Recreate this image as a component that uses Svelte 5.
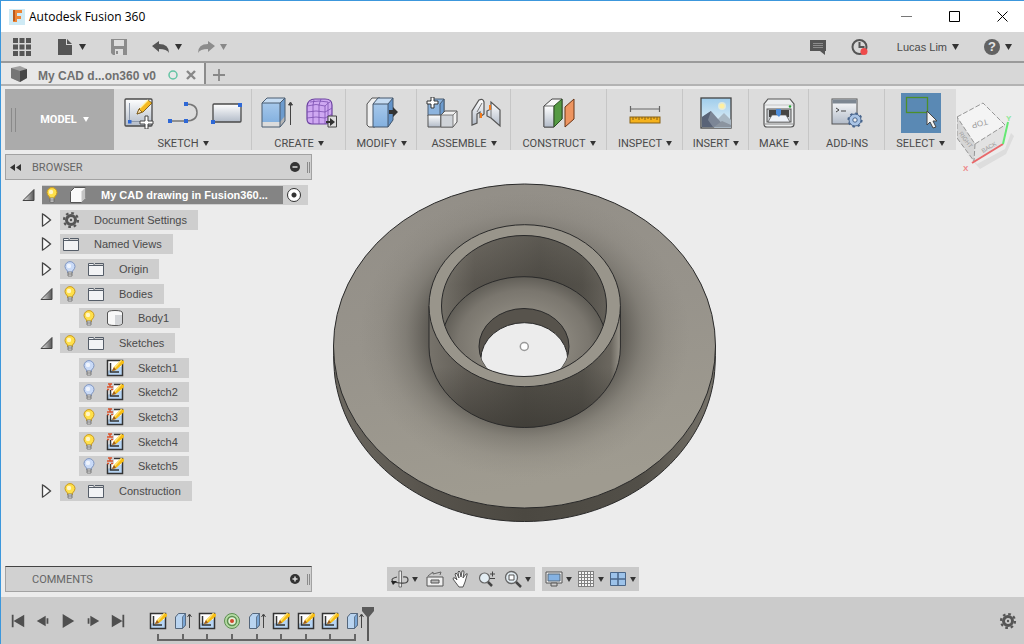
<script lang="ts">
	interface TreeNode {
		label: string;
		level: number;
		icon: string;
		open?: boolean;
		bulb?: boolean;
	}

	interface ToolGroup {
		label: string;
		icons: string[];
		menu: boolean;
	}

	const groups: ToolGroup[] = [
		{ label: 'SKETCH', icons: ['newsketch', 'spline', 'rect'], menu: true },
		{ label: 'CREATE', icons: ['extrude', 'form'], menu: true },
		{ label: 'MODIFY', icons: ['presspull'], menu: true },
		{ label: 'ASSEMBLE', icons: ['component', 'joint'], menu: true },
		{ label: 'CONSTRUCT', icons: ['plane'], menu: true },
		{ label: 'INSPECT', icons: ['measure'], menu: true },
		{ label: 'INSERT', icons: ['decal'], menu: true },
		{ label: 'MAKE', icons: ['print'], menu: true },
		{ label: 'ADD-INS', icons: ['script'], menu: false },
		{ label: 'SELECT', icons: ['select'], menu: true }
	];

	const nodes: TreeNode[] = [
		{ label: 'Document Settings', level: 1, icon: 'gear', open: false },
		{ label: 'Named Views', level: 1, icon: 'folder', open: false },
		{ label: 'Origin', level: 1, icon: 'folder', open: false, bulb: false },
		{ label: 'Bodies', level: 1, icon: 'folder', open: true, bulb: true },
		{ label: 'Body1', level: 2, icon: 'body', bulb: true },
		{ label: 'Sketches', level: 1, icon: 'folder', open: true, bulb: true },
		{ label: 'Sketch1', level: 2, icon: 'sketch', bulb: false },
		{ label: 'Sketch2', level: 2, icon: 'sketchlock', bulb: false },
		{ label: 'Sketch3', level: 2, icon: 'sketchlock', bulb: true },
		{ label: 'Sketch4', level: 2, icon: 'sketchlock', bulb: true },
		{ label: 'Sketch5', level: 2, icon: 'sketchlock', bulb: false },
		{ label: 'Construction', level: 1, icon: 'folder', open: false, bulb: true }
	];

	const playback = [
		{ name: 'Go to start', d: 'M2 2h2v14H2zM16 2v14L4 9z' },
		{ name: 'Step back', d: 'M12 3v12L2 9zM13 6h2v6h-2z' },
		{ name: 'Play', d: 'M3 1v16L16 9z' },
		{ name: 'Step forward', d: 'M6 3v12l10-6zM3 6h2v6H3z' },
		{ name: 'Go to end', d: 'M14 2h2v14h-2zM2 2v14l12-7z' }
	];

	const features = ['sketch', 'extrude', 'sketch', 'hole', 'extrude', 'sketch', 'sketch', 'sketch', 'extrude'];
</script>

{#snippet caret()}
	<svg class="caret" viewBox="0 0 7 6" aria-hidden="true"><path d="M0 0h7L3.500 6z" fill="currentColor" /></svg>
{/snippet}

{#snippet toolIcon(name: string)}
	<svg class="tool-icon" viewBox="0 0 32 32" aria-hidden="true">
		{#if name === 'newsketch'}
			<rect x="2" y="2" width="27" height="27" rx="1" fill="url(#steel)" stroke="#4a4a4a" stroke-width="1.300" />
			<path d="M6.500 6v18.500h15" fill="none" stroke="#8d99ab" />
			<rect x="5" y="23" width="3.500" height="3.500" fill="#2e68d6" />
			<path d="M14 17l2-5L25 3l4 3-9 9z" fill="#f5b921" stroke="#6b4a0c" stroke-width=".8" />
			<path d="M14 17l2-5 3 3z" fill="#fbe3b4" stroke="#6b4a0c" stroke-width=".7" />
			<path d="M17 11l8-8" stroke="#fff3a8" stroke-width="1.200" />
			<path d="M22 19h3v5h5v3h-5v5h-3v-5h-5v-3h5z" fill="#fff" stroke="#444" />
		{:else if name === 'spline'}
			<path d="M3 24h16q11 0 11-8.500T19 7" fill="none" stroke="#777" stroke-width="1.500" />
			<rect x="1" y="22" width="4" height="4" fill="#2e68d6" />
			<rect x="17" y="22" width="4" height="4" fill="#2e68d6" />
			<rect x="17" y="5" width="4" height="4" fill="#2e68d6" />
		{:else if name === 'rect'}
			<rect x="2" y="7" width="28" height="18" rx="1" fill="url(#steel)" stroke="#4a4a4a" stroke-width="1.300" />
			<rect x="0" y="23" width="4" height="4" fill="#2e68d6" />
			<rect x="27" y="6" width="4" height="4" fill="#2e68d6" />
		{:else if name === 'extrude'}
			<path d="M1 6l5-5h18v23l-5 6H1z" fill="#c6dcf2" />
			<path d="M1 6h18v20H1z" fill="url(#blue)" />
			<path d="M19 6l5-5v23l-5 6z" fill="#6c9bce" />
			<path d="M1 25h18v5H1z" fill="#dcdcdc" />
			<path d="M19 25l5-6v5l-5 6z" fill="#b5b5b5" />
			<path d="M1 6l5-5h18v23l-5 6H1zM1 6h18l5-5M19 6v24" fill="none" stroke="#4b5c70" />
			<path d="M29.500 6v22M27.500 8l2-3 2 3z" fill="#333" stroke="#444" />
		{:else if name === 'form'}
			<path d="M2 9q1-7 8-7h10q7 0 7 6v13q0 6-7 6H7q-5 0-5-5z" fill="#cfa8f2" stroke="#6b41a0" stroke-width="1.200" />
			<path d="M2 9q9-3 18 0v18M20 9q4-4 5-4M9 3L8 8v19M16 2l-2 6v19M2 15q9-2 18 0 4-2 7-4M2 21q9-2 18 0 4-2 7-4M5 5q9-2 18 0v21" fill="none" stroke="#7b4fb0" stroke-width=".8" />
			<path d="M23 19h8.500v11H23z" fill="#ddd" stroke="#444" />
			<path d="M21 24h4v-3l5 4-5 4v-3h-4z" fill="#333" />
		{:else if name === 'presspull'}
			<path d="M1 7l5-6h8l-5 6v23H3l-2-2z" fill="#f0f0f0" stroke="#555" />
			<path d="M7 7l5-6h15v22l-5 7H7z" fill="#c6dcf2" />
			<path d="M7 7h15v23H7z" fill="url(#blue)" />
			<path d="M22 7l5-6v22l-5 7z" fill="#6293c9" />
			<path d="M7 7l5-6h15v22l-5 7H7zM7 7h15l5-6M22 7v23" fill="none" stroke="#44576c" />
			<path d="M23 13h4v-3l5 5-5 5v-3h-4z" fill="#333" />
		{:else if name === 'component'}
			<path d="M2 7l4-5h12v13l-4 4H2z" fill="#8db4de" stroke="#4b5c70" />
			<path d="M14 7l4-5v13l-4 4z" fill="#6c9bce" stroke="#4b5c70" />
			<path d="M2 18h13v12H2z" fill="url(#steel)" stroke="#555" />
			<path d="M15 18l4-4h12v11l-4 5H15z" fill="#f0f0f0" stroke="#555" />
			<path d="M27 18H15v12h12zM27 18l4-4" fill="#cfd3d8" stroke="#666" stroke-width=".8" />
			<path d="M5 0h3v4h4v3H8v4H5V7H1V4h4z" fill="#fff" stroke="#333" />
		{:else if name === 'joint'}
			<path d="M2 28V14l7-11q4-2 5 2v12l-4 3v-5l-3 2v9z" fill="url(#steel)" stroke="#555" stroke-width="1.200" />
			<path d="M17 14l4-2V5l9 8v16l-9-8-4-2z" fill="url(#steel)" stroke="#555" stroke-width="1.200" />
			<path d="M7 15l5-9M21 12v9" stroke="#777" />
			<path d="M11 16v5M20 8v5" stroke="#f27a1a" stroke-width="2" />
		{:else if name === 'plane'}
			<path d="M1 9l8-7h10v20l-8 8H1z" fill="#f8f8f8" stroke="#444" />
			<path d="M1 9h10v21H1z" fill="url(#steel)" stroke="#444" stroke-width=".8" />
			<path d="M11 9l8-7v20l-8 8z" fill="#559a43" stroke="#2c4f22" />
			<path d="M22 10l9-8v20l-9 8z" fill="#ee9560" stroke="#6b3415" />
		{:else if name === 'measure'}
			<path d="M1 12h30M1.500 9v6M30.500 9v6" stroke="#666" stroke-width="1.200" />
			<rect x="1" y="20" width="30" height="6" fill="#f5b21c" stroke="#866016" />
			<path d="M4 20v3M7 20v2M10 20v3M13 20v2M16 20v3M19 20v2M22 20v3M25 20v2M28 20v3" stroke="#866016" />
		{:else if name === 'decal'}
			<rect x="1" y="1" width="30" height="30" fill="url(#sky)" stroke="#444" stroke-width="1.300" />
			<circle cx="22" cy="9" r="4" fill="#fff7d0" opacity=".6" />
			<circle cx="22" cy="9" r="2.500" fill="#fff0a0" />
			<path d="M16 24l8-8 7 7v8H14z" fill="#a9b8c4" />
			<path d="M2 20l9-6 14 16H2z" fill="#7c8696" />
			<path d="M2 20l9-6-3 9 5 7H2z" fill="#596377" />
			<path d="M14 30l8-6 9 4v2z" fill="#8b949f" />
		{:else if name === 'print'}
			<path d="M5 2h22l4 5v20q0 3-3 3H4q-3 0-3-3V7z" fill="#eceeef" stroke="#555" stroke-width="1.200" />
			<path d="M2 8h28" stroke="#c4c4c4" />
			<rect x="4" y="12" width="24" height="13" fill="#c8ccd0" stroke="#555" />
			<path d="M6 13h20v7H6z" fill="#444" />
			<path d="M9 18h14l4 7H5z" fill="#eef2f8" stroke="#555" stroke-width=".7" />
			<path d="M13 12h5v5l-2 3-3-3z" fill="#4d8ddb" />
			<path d="M1 27h30" stroke="#888" />
			<circle cx="27" cy="9.500" r="1.200" fill="#1fa32f" />
		{:else if name === 'script'}
			<rect x="1" y="2" width="25" height="25" fill="url(#steel)" stroke="#555" />
			<path d="M1.500 2.500h24v4h-24z" fill="#7d8792" />
			<path d="M5 11l3 2-3 2M10 14h5" fill="none" stroke="#444" />
			<circle cx="24" cy="23" r="6" fill="#a9c4e6" stroke="#47648c" />
			<circle cx="24" cy="23" r="6.800" fill="none" stroke="#47648c" stroke-width="1.600" stroke-dasharray="2.600 2.740" />
			<circle cx="24" cy="23" r="2.200" fill="#eee" stroke="#47648c" />
		{/if}
	</svg>
{/snippet}

{#snippet sketchIcon(locked: boolean)}
	<svg class="node-icon" viewBox="0 0 18 18" aria-hidden="true">
		<rect x="1" y="1" width="16" height="16" fill="#fff" />
		<path d="M1 12l16-5v10H1z" fill="#b6d4f3" />
		<rect x="1.500" y="1.500" width="15" height="15" fill="none" stroke="#333" stroke-width="1.500" />
		<path d="M4.500 4v9h8.500" fill="none" stroke="#333" stroke-width="1.500" />
		<path d="M6 12l2-4 7-7 3 1v2l-8 7z" fill="#f7bd14" />
		<path d="M8 8l7-7 1 .5-7 8z" fill="#fde37a" />
		<path d="M6 12l2-4 2 3z" fill="#9c5a22" />
		{#if locked}
			<path d="M0 0h8v7H0z" fill="#cecece" />
			<path d="M2 1h4M1 4h6M1 6.500h2M5 6.500h2M4 1v3" stroke="#d9532c" stroke-width="1.500" />
		{/if}
	</svg>
{/snippet}

{#snippet bulbIcon(on: boolean)}
	<svg class="bulb" viewBox="0 0 12 16" aria-hidden="true">
		<path d="M6 .6a5 5 0 0 1 5 5q0 2-2.500 4.500v1.500h-5v-1.500Q1 7.600 1 5.600a5 5 0 0 1 5-5z" fill={on ? '#ffe04a' : '#c9daf7'} stroke={on ? '#c9991f' : '#7f95c0'} />
		<circle cx="5" cy="5" r="2.200" fill="#fff" opacity=".7" />
		<path d="M4 11h4v4H4z" fill="#eee" stroke="#666" stroke-width=".8" />
		<path d="M4 13h4" stroke="#666" />
	</svg>
{/snippet}

{#snippet nodeIcon(name: string)}
	{#if name === 'sketch' || name === 'sketchlock'}
		{@render sketchIcon(name === 'sketchlock')}
	{:else}
		<svg class="node-icon" viewBox="0 0 18 18" aria-hidden="true">
			{#if name === 'gear'}
				<circle cx="9" cy="9" r="7" fill="none" stroke="#555" stroke-width="2.200" stroke-dasharray="2.700 2.800" />
				<circle cx="9" cy="9" r="4.500" fill="none" stroke="#555" stroke-width="3" />
				<circle cx="9" cy="9" r="1.200" fill="#555" />
			{:else if name === 'folder'}
				<path d="M1.500 15.500v-12h5l1 2h9v10z" fill="#f2f3f5" stroke="#555d68" />
				<path d="M2 5.500h6M8 3.500h8.500v2" fill="none" stroke="#555d68" />
			{:else if name === 'body'}
				<path d="M1.500 4q0-2.500 7.500-2.500T16.500 4v10q0 2.500-7.500 2.500T1.500 14z" fill="#f8f8f8" stroke="#555" />
				<path d="M9 6h7v8q-2 2-7 2z" fill="#d3d5d8" />
			{:else if name === 'component'}
				<path d="M1.500 5.500l4-4h11v11l-4 4h-11z" fill="#fafafa" stroke="#555" />
				<path d="M12.500 5.500l4-4v11l-4 4z" fill="#c4c4c4" />
			{/if}
		</svg>
	{/if}
{/snippet}

{#snippet expander(open: boolean)}
	<svg class="expander" viewBox="0 0 13 14" aria-hidden="true">
		{#if open}
			<path d="M12 1.500v11H1z" fill="url(#wedge)" stroke="#444" />
		{:else}
			<path d="M2.500 1v12q1 0 8-6-7-6-8-6z" fill="#f8f8f8" stroke="#444" stroke-width="1.300" />
		{/if}
	</svg>
{/snippet}

<div class="window">
	<svg class="defs" aria-hidden="true">
		<defs>
			<linearGradient id="steel" x2="0" y2="1"><stop stop-color="#fff" /><stop offset="1" stop-color="#b2bbc8" /></linearGradient>
			<linearGradient id="blue" x2="0" y2="1"><stop stop-color="#a6c8eb" /><stop offset="1" stop-color="#83b0df" /></linearGradient>
			<linearGradient id="sky" x2="0" y2="1"><stop stop-color="#9fcdec" /><stop offset="1" stop-color="#e9f3f8" /></linearGradient>
			<linearGradient id="wedge"><stop stop-color="#eee" /><stop offset="1" stop-color="#555" /></linearGradient>
		</defs>
	</svg>

	<header class="titlebar">
		<svg class="logo" viewBox="0 0 16 16" aria-hidden="true">
			<rect width="16" height="16" fill="#cfeaf5" />
			<path d="M4 1h9v3H8v3h4v3H8v3H4z" fill="#ee8534" />
			<path d="M4 1h2v11H4z" fill="#ba5a1c" />
		</svg>
		<h1>Autodesk Fusion 360</h1>
		<div class="window-buttons">
			<button aria-label="Minimize"><svg viewBox="0 0 11 11"><path d="M0 5.500h11" stroke="#777" /></svg></button>
			<button aria-label="Maximize"><svg viewBox="0 0 11 11"><path d="M.5.5h10v10H.5z" fill="none" stroke="#000" /></svg></button>
			<button aria-label="Close"><svg viewBox="0 0 11 11"><path d="M.5.5l10 10M10.500.5l-10 10" stroke="#000" /></svg></button>
		</div>
	</header>

	<div class="appbar">
		<button class="grid-btn" aria-label="Data panel">
			<svg class="i18" viewBox="0 0 18 18"><path d="M0 0h5v5H0zM6.500 0h5v5h-5zM13 0h5v5h-5zM0 6.500h5v5H0zM6.500 6.500h5v5h-5zM13 6.500h5v5h-5zM0 13h5v5H0zM6.500 13h5v5h-5zM13 13h5v5h-5z" fill="#555" /></svg>
		</button>
		<button class="file-btn" aria-label="File">
			<svg class="i18" viewBox="0 0 18 18"><path d="M2 1h8v6h6v10H2zM11 1l5 5h-5z" fill="#555" /></svg>
			{@render caret()}
		</button>
		<button class="save-btn" aria-label="Save">
			<svg class="i18" viewBox="0 0 18 18"><path d="M1 1h16v16H3l-2-2z" fill="#8c8c8c" /><path d="M4 2h10v6H4zM5 11h8v6H5z" fill="#ddd" /><path d="M6 13h2v3H6z" fill="#8c8c8c" /></svg>
		</button>
		<button class="undo-btn" aria-label="Undo">
			<svg class="i18" viewBox="0 0 18 18"><path d="M0 8l7-5v3q10 0 10 9-2-4-10-4v3z" fill="#555" /></svg>
			{@render caret()}
		</button>
		<button class="redo-btn" aria-label="Redo">
			<svg class="i18" viewBox="0 0 18 18"><path d="M18 8l-7-5v3Q1 6 1 15q2-4 10-4v3z" fill="#8c8c8c" /></svg>
			{@render caret()}
		</button>
		<div class="account">
			<button aria-label="Comments">
				<svg class="i18" viewBox="0 0 18 18"><path d="M1 2h16v11h-1v4l-5-4H1z" fill="#555" /><path d="M4 5.500h10M4 7.500h10M4 9.500h10" stroke="#8c8c8c" /></svg>
			</button>
			<button class="clock" aria-label="Job status">
				<svg class="i18" viewBox="0 0 18 18"><circle cx="8.500" cy="9" r="7" fill="none" stroke="#555" stroke-width="2" /><path d="M8.500 4v5h5" fill="none" stroke="#555" stroke-width="2" /><circle cx="13" cy="13.500" r="3.500" fill="#ef4b4b" /></svg>
			</button>
			<button class="user">Lucas Lim {@render caret()}</button>
			<button class="help" aria-label="Help">
				<span class="help-mark">?</span>
				{@render caret()}
			</button>
		</div>
	</div>

	<nav class="tabs">
		<div class="tab">
			<svg class="tab-cube" viewBox="0 0 18 18"><path d="M1 3l9-2 7 3v9l-7 4-9-4z" fill="#a0a0a0" /><path d="M1 3l9 3v11l-9-4z" fill="#757575" /><path d="M10 6l7-2v9l-7 4z" fill="#484848" /></svg>
			<span class="tab-name">My CAD d...on360 v0</span>
			<svg class="tab-state" viewBox="0 0 10 10"><circle cx="5" cy="5" r="4" fill="none" stroke="#63c4a4" stroke-width="1.500" /></svg>
			<button aria-label="Close tab"><svg viewBox="0 0 10 10"><path d="M1 1l8 8M9 1l-8 8" stroke="#888" stroke-width="2.400" /></svg></button>
		</div>
		<button class="new-tab" aria-label="New tab"><svg viewBox="0 0 12 12"><path d="M6 0v12M0 6h12" stroke="#888" stroke-width="1.800" /></svg></button>
	</nav>

	<main class="canvas">
		<svg class="model" viewBox="1 86 1023 511" role="img" aria-label="Flanged ring body">
			<defs>
				<linearGradient id="face" x2="0.200" y2="1"><stop stop-color="#928e87" /><stop offset=".5" stop-color="#97938b" /><stop offset="1" stop-color="#9f9b90" /></linearGradient>
				<linearGradient id="edge"><stop stop-color="#6d6961" /><stop offset=".25" stop-color="#57534c" /><stop offset=".5" stop-color="#4b4841" /><stop offset=".8" stop-color="#524f48" /><stop offset="1" stop-color="#79756c" /></linearGradient>
				<linearGradient id="wall"><stop stop-color="#77736b" /><stop offset=".2" stop-color="#625e57" /><stop offset=".5" stop-color="#535049" /><stop offset=".8" stop-color="#57544d" /><stop offset=".95" stop-color="#6b675f" /><stop offset="1" stop-color="#99958b" /></linearGradient>
				<linearGradient id="shade" x2="0" y2="1"><stop offset=".5" stop-color="#35332e" stop-opacity="0" /><stop offset="1" stop-color="#35332e" stop-opacity=".6" /></linearGradient>
				<linearGradient id="bore"><stop stop-color="#8b877e" /><stop offset=".2" stop-color="#66625b" /><stop offset=".6" stop-color="#524f49" /><stop offset=".85" stop-color="#5c5952" /><stop offset="1" stop-color="#77736b" /></linearGradient>
				<linearGradient id="boreShade" x2="0" y2="1"><stop stop-color="#77736a" stop-opacity=".3" /><stop offset=".35" stop-color="#3c3933" stop-opacity=".3" /></linearGradient>
				<radialGradient id="contact"><stop offset=".5" stop-color="#4a4741" stop-opacity=".95" /><stop offset=".6" stop-color="#4f4c46" stop-opacity=".72" /><stop offset=".72" stop-color="#5c5952" stop-opacity=".38" /><stop offset=".86" stop-color="#6b6760" stop-opacity=".13" /><stop offset="1" stop-color="#77736b" stop-opacity="0" /></radialGradient>
				<radialGradient id="floor"><stop offset=".5" stop-color="#8a867d" /><stop offset=".8" stop-color="#7a766e" /><stop offset="1" stop-color="#615e57" /></radialGradient>
				<clipPath id="mouth"><ellipse cx="524" cy="306" rx="82.500" ry="70.500" /></clipPath>
				<clipPath id="holeClip"><ellipse cx="524" cy="346.500" rx="45" ry="38" /></clipPath>
			</defs>
			<path d="M333.500 346q0 20 1.500 32C346 458 425 521.500 524.500 521.500S703 458 714 378q1.500-12 1.500-32z" fill="url(#edge)" stroke="#2a2a2a" />
			<ellipse cx="524.500" cy="346" rx="191" ry="162" fill="url(#face)" stroke="#2a2a2a" />
			<ellipse cx="524.500" cy="335" rx="165" ry="143" fill="url(#contact)" />
			<path d="M429 306v41a95.700 80.500 0 0 0 191.400 0v-41z" fill="url(#wall)" />
			<path d="M429 306v41a95.700 80.500 0 0 0 191.400 0v-41z" fill="url(#shade)" stroke="#2a2a2a" />
			<ellipse cx="524.700" cy="305.700" rx="95.700" ry="81" fill="#99958b" stroke="#2a2a2a" />
			<g clip-path="url(#mouth)">
				<rect x="441" y="235" width="166" height="142" fill="url(#bore)" />
				<rect x="441" y="235" width="166" height="142" fill="url(#boreShade)" />
				<ellipse cx="524" cy="344.200" rx="82.500" ry="67.500" fill="url(#floor)" stroke="#2a2a2a" />
				<ellipse cx="524" cy="346.500" rx="45" ry="38" fill="#57534c" stroke="#2a2a2a" />
				<g clip-path="url(#holeClip)">
					<ellipse cx="524.300" cy="359.700" rx="43.500" ry="37" fill="#ececec" stroke="#2a2a2a" />
				</g>
			</g>
			<ellipse cx="524" cy="306" rx="82.500" ry="70.500" fill="none" stroke="#2a2a2a" />
			<circle cx="524.300" cy="346.500" r="4" fill="#fff" stroke="#999" stroke-width="1.500" />
		</svg>

		<svg class="viewcube" viewBox="0 0 66 82" role="img" aria-label="View cube">
			<path d="M8 60l12 12 28-15 6-16 3 3-8 18-26 15z" fill="#bbb" opacity=".3" />
			<path d="M0 25l26-14 22 22-30 19z" fill="#f4f4f4" />
			<path d="M0 25l18 27-1 17L0 46z" fill="#d6d6d6" />
			<path d="M18 52l30-19-2 19-29 17z" fill="#e2e2e2" />
			<path d="M0 25l26-14 22 22-30 19zM18 52l-1 17M0 25v21l17 23" fill="none" stroke="#8c8c8c" stroke-dasharray="5 2" stroke-width=".9" />
			<path d="M15 71l31-19" stroke="#e8686a" stroke-width="2" />
			<path d="M46 52l5-22" stroke="#66e874" stroke-width="2" />
			<text class="cube-text top" transform="translate(22 29) rotate(165)">TOP</text>
			<text class="cube-text" transform="translate(33 57) rotate(-30)">BACK</text>
			<text class="cube-text" transform="translate(7 49) rotate(53)">RIGHT</text>
			<text class="axis x" x="6" y="79">X</text>
			<text class="axis y" x="49" y="29">Y</text>
		</svg>

		<div class="toolbar">
			<button class="workspace"><span class="grip"></span><span class="workspace-name">MODEL {@render caret()}</span></button>
			{#each groups as group (group.label)}
				<div class="group">
					<div class="group-icons">
						{#each group.icons as icon (icon)}
							{#if icon === 'select'}
								<button class="selected" aria-label="Select">
									<svg viewBox="0 0 40 40"><rect x="5.500" y="4.500" width="21" height="15" fill="none" stroke="#4d8f2a" stroke-width="1.300" /><path d="M26 18v14l3-3 3 6 3-1-3-6h4z" fill="#f4f4f4" stroke="#444" /></svg>
								</button>
							{:else}
								<button aria-label={icon}>{@render toolIcon(icon)}</button>
							{/if}
						{/each}
					</div>
					<button class="group-label">{group.label}{#if group.menu}{@render caret()}{/if}</button>
				</div>
			{/each}
		</div>

		<section class="browser">
			<header class="panel">
				<svg class="collapse" viewBox="0 0 11 7"><path d="M5 0v7L0 3.500zM11 0v7L6 3.500z" fill="#333" /></svg>
				<h2>BROWSER</h2>
				<button aria-label="Minimize browser"><svg viewBox="0 0 10 10"><circle cx="5" cy="5" r="5" fill="#333" /><path d="M2.500 5h5" stroke="#ddd" stroke-width="1.500" /></svg></button>
				<span class="panel-grip"></span>
			</header>
			<ul class="tree">
				<li class="level-0">
					{@render expander(true)}
					<div class="node root">
						<div class="root-name">
							<span class="slot-bulb">{@render bulbIcon(true)}</span>
							<span class="slot-icon">{@render nodeIcon('component')}</span>
							<span class="name">My CAD drawing in Fusion360...</span>
						</div>
						<input type="radio" name="active" checked aria-label="Activate component" />
					</div>
				</li>
				{#each nodes as node (node.label)}
					<li class="level-{node.level}">
						{#if node.open !== undefined}
							{@render expander(node.open)}
						{/if}
						<div class="node">
							{#if node.bulb !== undefined}
								<span class="slot-bulb">{@render bulbIcon(node.bulb)}</span>
								<span class="slot-icon">{@render nodeIcon(node.icon)}</span>
							{:else}
								<span class="slot-bulb wide">{@render nodeIcon(node.icon)}</span>
							{/if}
							<span class="name">{node.label}</span>
						</div>
					</li>
				{/each}
			</ul>
		</section>

		<div class="bottom">
			<section class="panel comments">
				<h2>COMMENTS</h2>
				<button aria-label="Expand comments"><svg viewBox="0 0 10 10"><circle cx="5" cy="5" r="5" fill="#333" /><path d="M2.500 5h5M5 2.500v5" stroke="#ddd" stroke-width="1.500" /></svg></button>
				<span class="panel-grip"></span>
			</section>
			<div class="navbars">
				<div class="navbar">
					<button aria-label="Orbit"><svg viewBox="0 0 18 18"><path d="M8 1h2.500v16H8z" fill="#eee" stroke="#555" stroke-width=".8" /><path d="M6 7Q1 8 1 10t8 3 8-3-5-3" fill="none" stroke="#444" stroke-width="1.200" /><path d="M0 11h6l-4 4z" fill="#222" /></svg>{@render caret()}</button>
					<button aria-label="Look at"><svg viewBox="0 0 18 18"><path d="M1 7h16v9H1z" fill="#eee" stroke="#555" /><path d="M5 10h8v3H5z" fill="#bbb" stroke="#555" /><path d="M2 6l5-4v2l8-2-1 3" fill="none" stroke="#666" /></svg></button>
					<button aria-label="Pan"><svg viewBox="0 0 18 18"><path d="M7 17L1 9q0-2 2-1l2 2L3 4q1-2 2 0l2 4-1-6q1-2 2 0l1 5 1-6q2-1 2 1l-1 6 3-4q2-1 1 1l-2 7-2 5z" fill="#fff" stroke="#555" /></svg></button>
					<button aria-label="Zoom"><svg viewBox="0 0 18 18"><circle cx="6.500" cy="8" r="5" fill="#e3edf3" stroke="#666" stroke-width="1.200" /><path d="M10 12l4 4" stroke="#444" stroke-width="2.500" /><path d="M12 4h5M14.500 1.500v5M12 8.500h5" stroke="#444" /></svg></button>
					<button aria-label="Fit"><svg viewBox="0 0 18 18"><circle cx="7.500" cy="7.500" r="6" fill="#e3edf3" stroke="#666" stroke-width="1.300" /><path d="M5 5h5v5H5z" fill="#fff" stroke="#555" /><path d="M12 12l5 5" stroke="#444" stroke-width="2.500" /></svg>{@render caret()}</button>
				</div>
				<div class="navbar views">
					<button aria-label="Display settings"><svg viewBox="0 0 18 18"><path d="M1 2h16v11H1z" fill="#eee" stroke="#555" /><path d="M3 4h12v7H3z" fill="#85b2e2" stroke="#567" /><path d="M6 13h6v3H6z" fill="#ccc" stroke="#555" /></svg>{@render caret()}</button>
					<button aria-label="Grid and snaps"><svg viewBox="0 0 18 18"><path d="M1 1h16v16H1z" fill="#f4f4f4" /><path d="M1.500 1v16M4.500 1v16M7.500 1v16M10.500 1v16M13.500 1v16M16.500 1v16M1 1.500h16M1 4.500h16M1 7.500h16M1 10.500h16M1 13.500h16M1 16.500h16" stroke="#808080" /></svg>{@render caret()}</button>
					<button aria-label="Viewports"><svg viewBox="0 0 18 18"><path d="M1.500 2.500h15v13h-15z" fill="#9dc3ea" stroke="#4a6688" /><path d="M9 3v13M1 9h16" stroke="#4a6688" stroke-width="1.500" /></svg>{@render caret()}</button>
				</div>
			</div>
		</div>
	</main>

	<footer class="timeline">
		<div class="playback">
			{#each playback as step (step.name)}
				<button aria-label={step.name}><svg viewBox="0 0 18 18"><path d={step.d} fill="#4f4f4f" /></svg></button>
			{/each}
		</div>
		<div class="history">
			<div class="features">
				{#each features as feature}
					<button aria-label={feature}>
						{#if feature === 'sketch'}
							{@render sketchIcon(false)}
						{:else if feature === 'hole'}
							<svg class="node-icon" viewBox="0 0 18 18"><circle cx="9" cy="9" r="7.500" fill="#b5dba4" stroke="#5d8f51" /><circle cx="9" cy="9" r="4.500" fill="#e7efd8" stroke="#5d8f51" stroke-width="1.500" /><circle cx="9" cy="9" r="2" fill="#d1492c" /></svg>
						{:else}
							<svg class="node-icon" viewBox="0 0 18 18"><path d="M1.500 5l3-3.500h7V13l-3 3.500h-7z" fill="#b9d4f0" stroke="#54667b" /><path d="M8.500 5l3-3.500V13l-3 3.500z" fill="#7ba7d6" stroke="#54667b" stroke-width=".8" /><path d="M15.500 3v13M13.500 5l2-3 2 3" fill="none" stroke="#444" /></svg>
						{/if}
					</button>
				{/each}
			</div>
			<div class="ruler">
				{#each features as _}<span></span>{/each}
			</div>
			<svg class="marker" viewBox="0 0 14 34"><path d="M1 0h12v4L8 10v24H6V10L1 4z" fill="#5a5a5a" /></svg>
		</div>
		<button class="settings" aria-label="Timeline settings">{@render nodeIcon('gear')}</button>
	</footer>
</div>

<style>
	:global(body) {
		margin: 0;
		font-family: 'Liberation Sans', Arial, sans-serif;
		font-size: 11px;
		color: #4a4a4a;
	}

	button {
		display: flex;
		align-items: center;
		justify-content: center;
		padding: 0;
		border: 0;
		background: none;
		font: inherit;
		color: inherit;
	}

	svg {
		display: block;
		flex: none;
	}

	h1,
	h2 {
		margin: 0;
		font-weight: 400;
	}

	.window {
		box-sizing: border-box;
		display: flex;
		flex-direction: column;
		height: 100vh;
		border-top: 1px solid #3c97dc;
		border-left: 1px solid #3c97dc;
		background: #ececec;
		overflow: hidden;
	}

	.defs {
		position: absolute;
		width: 0;
		height: 0;
	}

	.caret {
		width: 7px;
		height: 6px;
		color: #333;
	}

	.titlebar {
		display: flex;
		align-items: center;
		height: 31px;
		padding-left: 8px;
		background: #fff;
	}

	.logo {
		width: 16px;
		height: 16px;
	}

	.titlebar h1 {
		margin-left: 4px;
		font: 12px 'Open Sans', sans-serif;
		color: #000;
	}

	.window-buttons {
		display: flex;
		gap: 4px;
		margin-left: auto;
	}

	.window-buttons button {
		width: 44px;
		height: 31px;
	}

	.window-buttons svg {
		width: 11px;
		height: 11px;
	}

	.appbar {
		display: flex;
		align-items: center;
		height: 29px;
		padding: 0 12px;
		border-bottom: 2px solid #9a9a9a;
		background: #d7d7d7;
	}

	.i18 {
		width: 18px;
		height: 18px;
	}

	.appbar button {
		gap: 5px;
	}

	.file-btn {
		margin-left: 25px;
	}

	.save-btn {
		margin-left: 24px;
	}

	.undo-btn {
		margin-left: 24px;
	}

	.redo-btn {
		margin-left: 15px;
	}

	.redo-btn .caret {
		color: #888;
	}

	.account {
		display: flex;
		align-items: center;
		margin-left: auto;
	}

	.clock {
		margin-left: 24px;
	}

	.user {
		margin-left: 28px;
	}

	.help {
		margin-left: 25px;
	}

	.help-mark {
		width: 16px;
		border-radius: 8px;
		background: #626262;
		color: #e4e4e4;
		font-size: 13px;
		font-weight: 700;
		line-height: 16px;
	}

	.tabs {
		display: flex;
		height: 21px;
		border-bottom: 2px solid #b3b3b3;
		background: #d7d7d7;
	}

	.tab {
		display: flex;
		align-items: center;
		padding: 0 8px 0 9px;
		border-right: 2px solid #8c8c8c;
		background: #e8e8e8;
	}

	.tab-cube {
		width: 18px;
		height: 18px;
	}

	.tab-name {
		margin-left: 10px;
		padding-top: 4px;
		font-size: 12px;
		font-weight: 700;
		color: #707070;
	}

	.tab-state {
		width: 10px;
		height: 10px;
		margin: 3px 8px 0 12px;
	}

	.tab button {
		padding-top: 3px;
	}

	.tab button svg {
		width: 10px;
		height: 10px;
	}

	.new-tab {
		width: 26px;
		padding-top: 3px;
	}

	.new-tab svg {
		width: 12px;
		height: 12px;
	}

	.canvas {
		position: relative;
		display: flex;
		flex: 1;
		flex-direction: column;
		min-height: 0;
		padding: 3px 0 5px 4px;
	}

	.model {
		position: absolute;
		inset: 0;
		width: 100%;
		height: 100%;
	}

	.viewcube {
		position: absolute;
		top: 6px;
		right: 1px;
		width: 66px;
		height: 82px;
	}

	.cube-text {
		font-size: 6px;
		fill: #9a9a9a;
		text-anchor: middle;
	}

	.cube-text.top {
		font-size: 8px;
	}

	.axis {
		font-size: 8px;
		font-weight: 700;
	}

	.axis.x {
		fill: #ee8888;
	}

	.axis.y {
		fill: #8ee898;
	}

	.toolbar {
		position: relative;
		display: grid;
		grid-template-columns: 109fr 138fr 94fr 71fr 94fr 96fr 76fr 66fr 60fr 76fr 71fr;
		height: 61px;
		margin-right: 68px;
		background: #dcdcdc;
		font-family: Roboto, sans-serif;
	}

	.toolbar .caret {
		width: 6px;
		height: 5px;
	}

	.workspace {
		position: relative;
		background: #ababab;
		color: #fff;
		font-weight: 700;
	}

	.grip {
		position: absolute;
		left: 6px;
		width: 3px;
		height: 24px;
		border: solid #8a8a8a;
		border-width: 0 1px;
	}

	.workspace-name {
		display: flex;
		align-items: center;
		gap: 6px;
		padding-left: 10px;
	}

	.workspace-name .caret {
		color: #fff;
	}

	.group {
		display: flex;
		flex-direction: column;
		align-items: center;
		box-shadow: inset -1px 0 #c6c6c6;
	}

	.group:last-child {
		box-shadow: none;
	}

	.group-icons {
		display: flex;
		align-items: center;
		gap: 12px;
		height: 48px;
	}

	.tool-icon {
		width: 32px;
		height: 32px;
	}

	.selected {
		background: #5a89b4;
	}

	.selected svg {
		width: 40px;
		height: 40px;
	}

	.group-label {
		gap: 4px;
		line-height: 13px;
	}

	.browser {
		position: relative;
		width: 307px;
		margin-top: 4px;
	}

	.panel {
		box-sizing: border-box;
		display: flex;
		align-items: center;
		height: 26px;
		padding: 0 1px 0 4px;
		border: 1px solid #a2a2a2;
		background: #d1d1d1;
		font-family: Roboto, sans-serif;
	}

	.panel h2 {
		font-size: 11px;
		color: #666;
	}

	.collapse {
		width: 11px;
		height: 7px;
		margin-right: 11px;
	}

	.panel button {
		margin: 0 7px 0 auto;
	}

	.panel button svg {
		width: 10px;
		height: 10px;
	}

	.panel-grip {
		width: 1px;
		height: 11px;
		border: solid #8a8a8a;
		border-width: 0 1px;
	}

	.tree {
		display: grid;
		grid-auto-rows: 20px;
		align-content: space-between;
		height: 316px;
		margin: 5px 0 0;
		padding: 0;
		list-style: none;
	}

	.tree li {
		display: flex;
		align-items: center;
		gap: 7px;
	}

	.tree .level-0 {
		padding-left: 17px;
		padding-right: 4px;
	}

	.tree .level-1 {
		padding-left: 35px;
	}

	.tree .level-2 {
		padding-left: 74px;
	}

	.expander {
		width: 13px;
		height: 14px;
	}

	.node {
		display: flex;
		align-items: center;
		height: 20px;
		padding-right: 11px;
		background: #cecece;
	}

	.root {
		flex: 1;
		gap: 4px;
		min-width: 0;
		padding-right: 7px;
	}

	.root-name {
		display: flex;
		flex: 1;
		align-items: center;
		height: 18px;
		min-width: 0;
		background: #848484;
		color: #fff;
		font-weight: 700;
	}

	.root-name .name {
		overflow: hidden;
		white-space: nowrap;
	}

	.root input {
		appearance: none;
		width: 14px;
		height: 14px;
		margin: 0;
		border: 1px solid #333;
		border-radius: 7px;
		background: radial-gradient(circle, #333 2px, #fff 3px);
	}

	.slot-bulb {
		display: flex;
		justify-content: center;
		width: 20px;
	}

	.slot-bulb.wide {
		width: 22px;
		margin-right: 12px;
	}

	.slot-icon {
		display: flex;
		justify-content: center;
		width: 26px;
		margin: 0 10px 0 3px;
	}

	.bulb {
		width: 12px;
		height: 16px;
	}

	.node-icon {
		width: 18px;
		height: 18px;
	}

	.bottom {
		position: relative;
		display: grid;
		grid-template-columns: 1fr auto 1fr;
		align-items: center;
		margin-top: auto;
		margin-right: 4px;
	}

	.comments {
		max-width: 307px;
		padding-left: 26px;
		border-top-color: #444;
	}

	.navbars {
		display: flex;
		gap: 7px;
	}

	.navbar {
		box-sizing: border-box;
		display: flex;
		align-items: center;
		gap: 8px;
		height: 24px;
		padding: 0 4px;
		background: #c9c9c9;
	}

	.navbar button {
		gap: 3px;
	}

	.navbar button svg {
		width: 18px;
		height: 18px;
	}

	.navbar button .caret {
		width: 6px;
		height: 5px;
	}

	.navbar.views {
		gap: 5px;
		padding: 0 3px;
	}

	.timeline {
		display: flex;
		height: 47px;
		padding: 0 7px 0 9px;
		background: #cbcbcb;
	}

	.playback {
		display: flex;
		align-items: center;
		gap: 9px;
	}

	.playback svg {
		width: 16px;
		height: 16px;
	}

	.history {
		position: relative;
		width: 215px;
		margin-left: 23px;
		padding-top: 15px;
	}

	.features,
	.ruler {
		display: flex;
		justify-content: space-between;
	}

	.ruler {
		height: 5px;
		margin: 4px 8px 0;
		border-bottom: 2px solid #666;
	}

	.ruler span {
		width: 2px;
		background: #666;
	}

	.marker {
		position: absolute;
		top: 10px;
		right: -11px;
		width: 14px;
		height: 34px;
	}

	.settings {
		margin-left: auto;
	}
</style>
